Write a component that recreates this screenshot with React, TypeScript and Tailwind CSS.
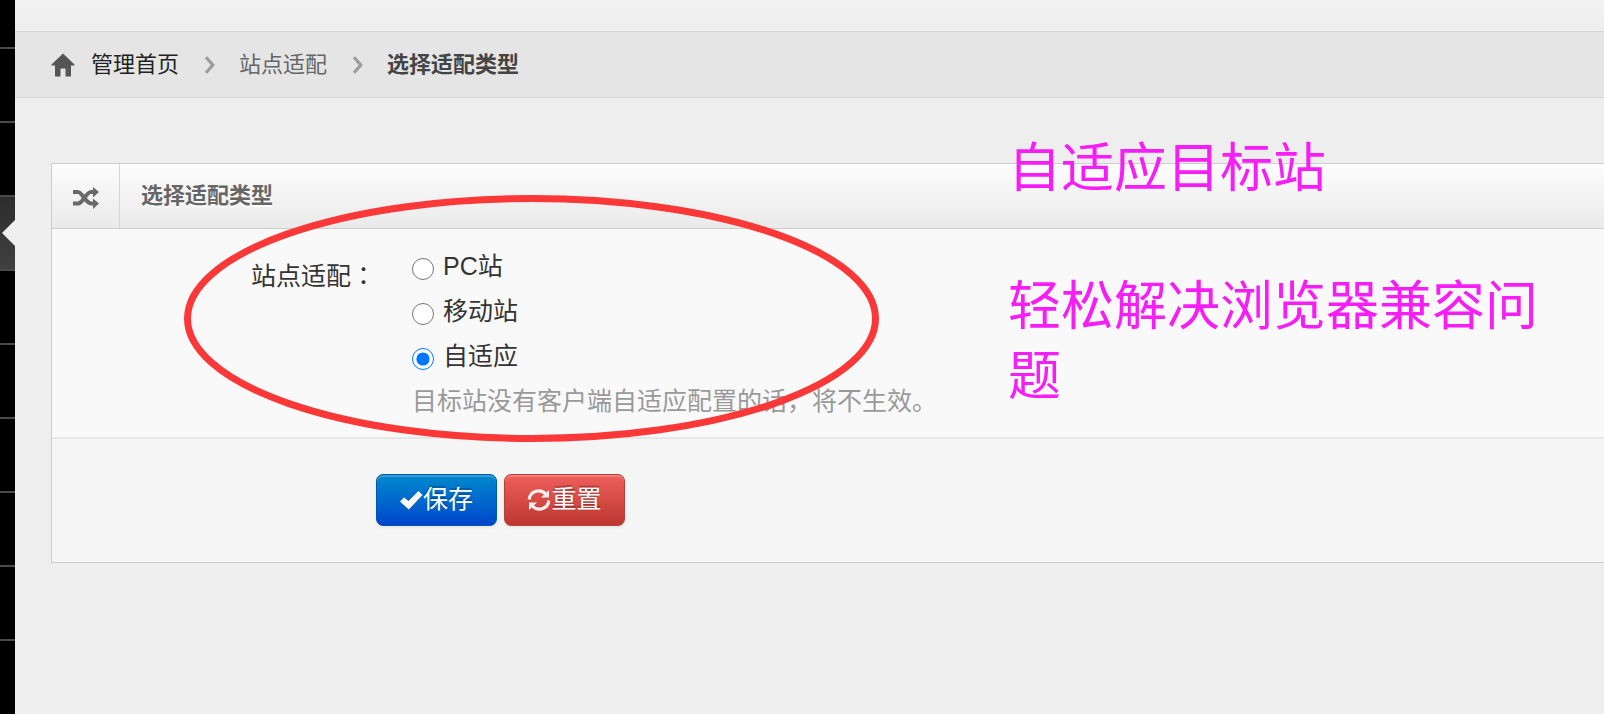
import React from 'react'

const cjk = "font-['Liberation_Sans','Noto_Sans_CJK_SC',sans-serif]"
const centered = "font-['Noto_Sans_CJK_TC',sans-serif]"

const HomeIcon = () => (
  <svg className="w-6 h-6 shrink-0" viewBox="0 0 24 24" fill="#555" aria-hidden="true">
    <path d="M12 0.5 L23.5 11.5 V12.5 H20 V23.5 H14.5 V15.5 H9.5 V23.5 H4 V12.5 H0.5 V11.5 Z" />
  </svg>
)

const ChevronIcon = () => (
  <svg className="w-[10px] h-[18px] shrink-0" viewBox="0 0 10 18" fill="none" stroke="#9c9c9c" strokeWidth="3.2" aria-hidden="true">
    <path d="M1 1.2 L7.8 9 L1 16.8" />
  </svg>
)

const ShuffleIcon = () => (
  <svg className="w-[26px] h-[22px]" viewBox="0 0 26 22" aria-hidden="true">
    <g fill="none" stroke="#696969" strokeWidth="4">
      <path d="M0 5 H5 C9 5 13 16.5 18 16.5 H21" />
      <path d="M0 16.5 H5 C10 16.5 13 5 18 5 H21" />
    </g>
    <path d="M20 0 L26 5 L20 10.5 Z M20 11.5 L26 16.5 L20 22 Z" fill="#696969" />
  </svg>
)

const CheckIcon = () => (
  <svg className="w-[23px] h-5" viewBox="0 0 23 20" fill="#fff" aria-hidden="true">
    <path d="M0 11.5 L4 7.5 L8.5 11 L18.5 1 L22.5 5 L8.8 19.5 Z" />
  </svg>
)

const RefreshIcon = () => (
  <svg className="w-6 h-6" viewBox="0 0 24 24" aria-hidden="true">
    <g fill="none" stroke="#f8eeee" strokeWidth="3.2">
      <path d="M2.2 11.5 C3 2.5 14 0.5 18.5 6" />
      <path d="M21.8 12.5 C21 21.5 10 23.5 5.5 18" />
    </g>
    <path d="M22 2 V9.5 H14 Z M2 22 V14.5 H10 Z" fill="#f8eeee" />
  </svg>
)

const Sidebar = () => (
  <nav className="w-[15px] shrink-0 bg-black overflow-hidden">
    <div className="h-[49px] border-b-2 border-[#4a4a4a]" />
    <div className="h-[74px] border-b-2 border-[#4a4a4a]" />
    <div className="h-[74px] border-b-2 border-[#4a4a4a]" />
    <div className="h-[74px] border-b-2 border-[#4a4a4a] bg-linear-to-b from-[#2d2d2d] to-[#404040] flex items-center justify-end">
      <svg className="w-[13px] h-[26px]" viewBox="0 0 13 26" fill="#eee" aria-hidden="true">
        <path d="M13 0 V26 L0 13 Z" />
      </svg>
    </div>
    {[1, 2, 3, 4, 5].map((n) => (
      <div key={n} className="h-[74px] border-b-2 border-[#4a4a4a]" />
    ))}
  </nav>
)

const Breadcrumb = () => (
  <div className="h-[67px] border-y border-[#d5d5d5] bg-[#e5e5e5] flex items-center px-9 text-[22px] leading-[30px] text-[#666]">
    <a href="#" className="flex items-center gap-4 text-[#222]">
      <HomeIcon />
      管理首页
    </a>
    <span className="pl-[26px] pr-6"><ChevronIcon /></span>
    <a href="#">站点适配</a>
    <span className="pl-[26px] pr-6"><ChevronIcon /></span>
    <a href="#" className="font-bold text-[#444]">选择适配类型</a>
  </div>
)

const options = ['PC站', '移动站', '自适应']

const TypeForm = () => (
  <form onSubmit={(e) => e.preventDefault()}>
    <fieldset className="flex h-[210px] pt-[15px] bg-[#f9f9f9] border-b-2 border-[#e7e7e7]">
      <div id="type-label" className="w-[324px] shrink-0 pt-3 text-right text-[25px] leading-9">
        站点适配<span className={centered}>：</span>
      </div>
      <div role="radiogroup" aria-labelledby="type-label" className="pl-9 text-[25px]">
        {options.map((name) => (
          <label key={name} className="flex items-center gap-[9px] h-[45px]">
            <input type="radio" name="type" defaultChecked={name === '自适应'} className="size-[22px] mt-1 accent-[#0075ff]" />
            {name}
          </label>
        ))}
        <p className="leading-[44px] text-[#999] whitespace-nowrap">
          目标站没有客户端自适应配置的话，将不生效。
        </p>
      </div>
    </fieldset>
    <div className="flex gap-[7px] pl-[324px] pt-[35px] pb-9 bg-[#f5f5f5]">
      <button type="submit" className="flex items-center justify-center w-[121px] h-[52px] rounded-[7px] border border-[#0055b0] bg-linear-to-b from-[#0088cc] to-[#0044cc] text-[25px] text-white text-shadow-[0_-2px_0_rgb(0_0_0/0.25)] shadow-[inset_0_2px_0_rgb(255_255_255/0.2),0_2px_3px_rgb(0_0_0/0.05)]">
        <CheckIcon />
        保存
      </button>
      <button type="reset" className="flex items-center justify-center w-[121px] h-[52px] rounded-[7px] border border-[#b9403b] bg-linear-to-b from-[#ee5f5b] to-[#bd362f] text-[25px] text-white text-shadow-[0_-2px_0_rgb(0_0_0/0.25)] shadow-[inset_0_2px_0_rgb(255_255_255/0.2),0_2px_3px_rgb(0_0_0/0.05)]">
        <RefreshIcon />
        重置
      </button>
    </div>
  </form>
)

const App = () => {
  return (
    <div className={`relative flex min-h-screen overflow-hidden bg-[#eee] text-[#333] ${cjk}`}>
      <Sidebar />
      <main className="flex-1 min-w-0">
        <div className="h-[31px] bg-linear-to-b from-[#f2f2f2] to-[#eee]" />
        <Breadcrumb />
        <section className="mt-[65px] ml-9 border border-r-0 border-[#cdcdcd]">
          <div className="flex h-[65px] border-b border-[#cdcdcd] bg-linear-to-b from-[#fdfdfd] to-[#eaeaea]">
            <div className="w-[68px] flex items-center justify-center border-r border-[#d5d5d5] pt-1">
              <ShuffleIcon />
            </div>
            <h5 className="px-[21px] text-[22px] leading-[64px] font-bold text-[#666] text-shadow-[0_2px_0_#fff]">
              选择适配类型
            </h5>
          </div>
          <TypeForm />
        </section>
      </main>

      {/* hand-drawn notes on top of the page */}
      <svg className="absolute left-[184px] top-[195px] w-[695px] h-[247px] pointer-events-none" viewBox="0 0 695 247" fill="none" aria-hidden="true">
        <ellipse cx="347.5" cy="123.5" rx="344" ry="120" stroke="#fb3838" strokeWidth="7" />
      </svg>
      <div className="absolute left-[1008px] top-[134px] w-[560px] text-[53px] leading-[70px] text-[#f71df7] pointer-events-none">
        <p className="mb-[68px]">自适应目标站</p>
        <p>轻松解决浏览器兼容问题</p>
      </div>
    </div>
  )
}

export default App
